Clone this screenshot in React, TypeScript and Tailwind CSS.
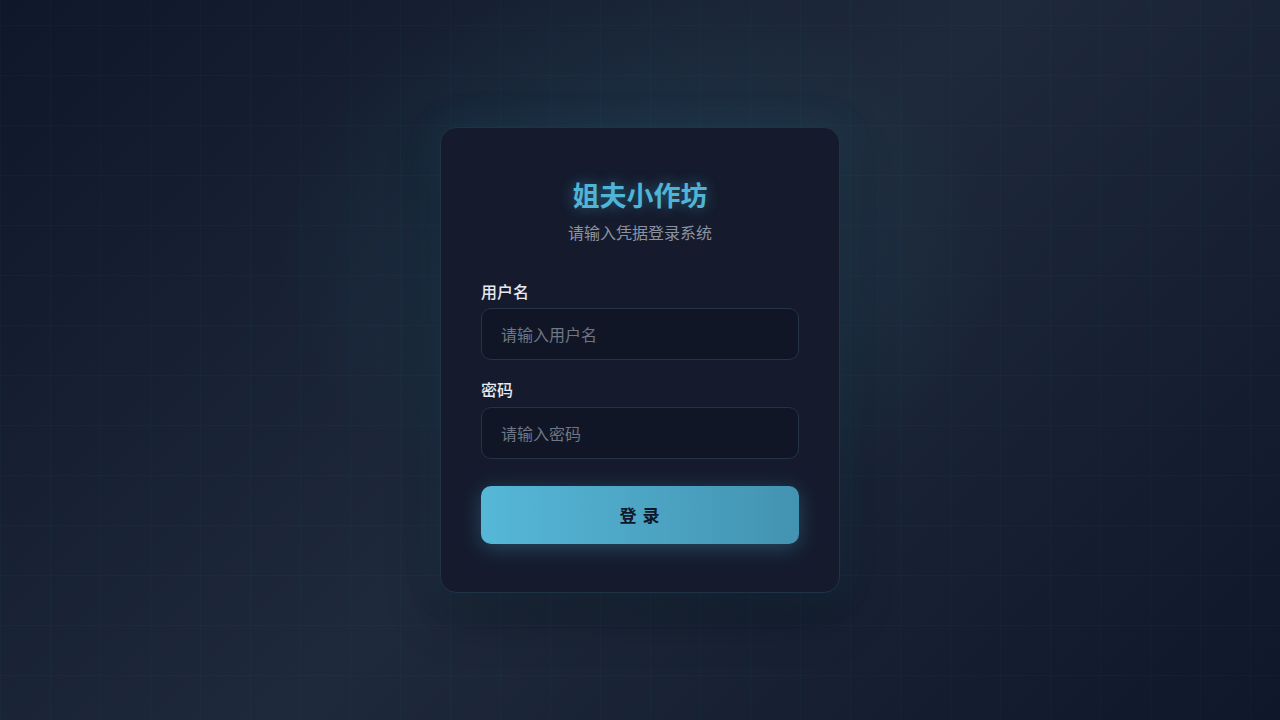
import { useState } from "react";

export default function App() {
  const [username, setUsername] = useState("");
  const [password, setPassword] = useState("");

  return (
    <div
      className="relative flex min-h-screen items-center justify-center overflow-hidden bg-[linear-gradient(135deg,#0f172a_0%,#1e293b_50%,#0f172a_100%)]"
      style={{ fontFamily: '"Noto Sans CJK SC", "Noto Sans", sans-serif' }}
    >
      {/* faint grid + glow behind the card */}
      <div className="pointer-events-none absolute inset-0 bg-[linear-gradient(rgba(56,189,248,0.03)_1px,transparent_1px),linear-gradient(90deg,rgba(56,189,248,0.03)_1px,transparent_1px)] bg-[length:50px_50px] bg-[position:0_25px]" />
      <div className="pointer-events-none absolute inset-0 bg-[radial-gradient(ellipse_520px_400px_at_50%_35%,rgba(56,160,190,0.13),transparent_70%)]" />

      <div className="relative w-[400px] rounded-2xl border border-[#1f3345] bg-[#151b2d] px-10 pt-12 pb-12 shadow-[0_0_40px_rgba(56,170,210,0.12),0_20px_50px_rgba(0,0,0,0.35)]">
        <div className="mb-[38px] text-center">
          <h1 className="text-[27px] leading-[38px] font-bold text-[#4fb4d6] [text-shadow:0_0_14px_rgba(79,180,214,0.45)]">
            姐夫小作坊
          </h1>
          <p className="mt-2 text-[16px] leading-5 text-[#8b93a3]">请输入凭据登录系统</p>
        </div>

        <label className="block text-[16px] leading-[22px] font-medium text-[#e5e9f0]">用户名</label>
        <input
          value={username}
          onChange={(e) => setUsername(e.target.value)}
          placeholder="请输入用户名"
          className="mt-[6px] block h-[52px] w-full rounded-[10px] border border-[#233447] bg-[#111627] px-[19px] text-[16px] text-[#e5e9f0] outline-none placeholder:text-[#6f7684]"
        />

        <label className="mt-[18px] block text-[16px] leading-[22px] font-medium text-[#e5e9f0]">密码</label>
        <input
          type="password"
          value={password}
          onChange={(e) => setPassword(e.target.value)}
          placeholder="请输入密码"
          className="mt-[7px] block h-[52px] w-full rounded-[10px] border border-[#233447] bg-[#111627] px-[19px] text-[16px] text-[#e5e9f0] outline-none placeholder:text-[#6f7684]"
        />

        <button className="mt-[27px] block h-[58px] w-full rounded-[10px] bg-[linear-gradient(90deg,#56b7d7,#4393b1)] text-[17px] font-bold tracking-[1px] text-[#0f172a] shadow-[0_4px_20px_rgba(80,180,220,0.3)]">
          登 录
        </button>
      </div>
    </div>
  );
}
